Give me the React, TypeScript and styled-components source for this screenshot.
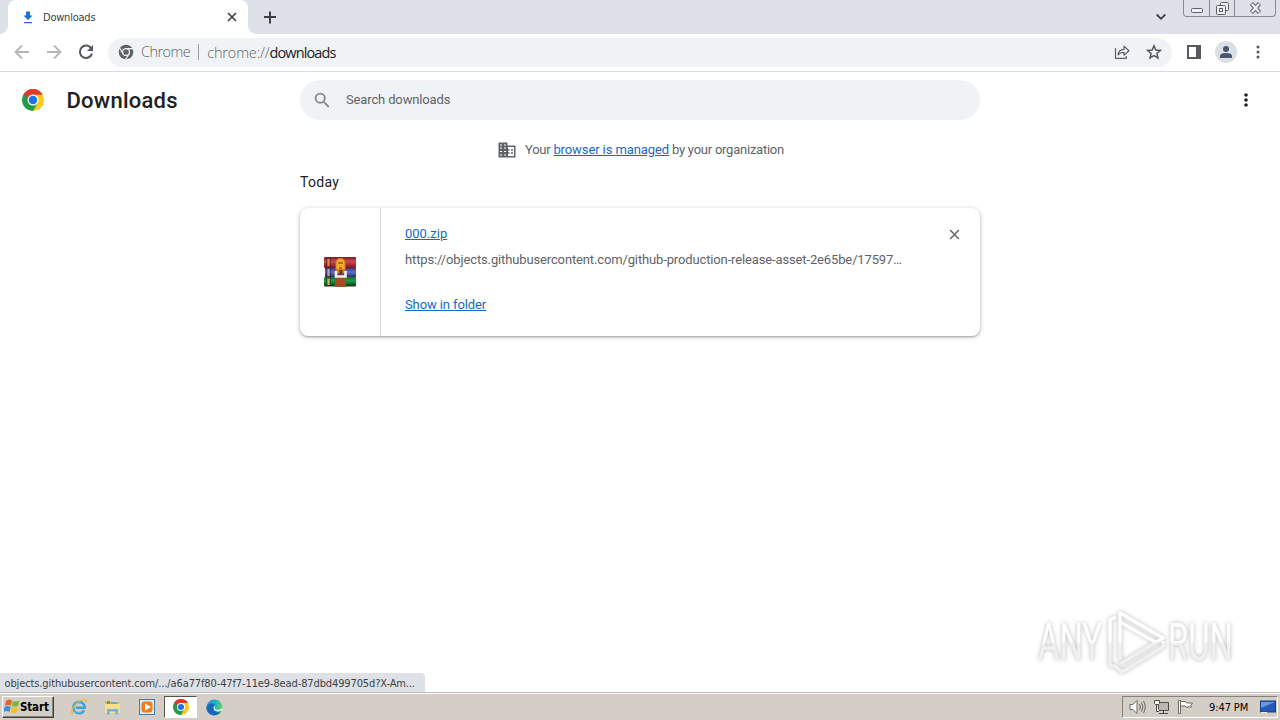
import React from 'react';
import styled, { createGlobalStyle } from 'styled-components';

const GlobalStyle = createGlobalStyle`
  * {
    box-sizing: border-box;
  }
  body {
    margin: 0;
    overflow: hidden;
    background: #fff;
    font-family: Roboto, 'Liberation Sans', sans-serif;
  }
  svg {
    display: block;
    flex: none;
  }
`;

const uiFont = `'DejaVu Sans Condensed', 'DejaVu Sans', sans-serif`;

const Screen = styled.div`
  position: relative;
  width: 1280px;
  height: 720px;
  display: flex;
  flex-direction: column;
  overflow: hidden;
`;

/* ---------- tab strip ---------- */

const TabStrip = styled.div`
  height: 34px;
  flex: none;
  display: flex;
  align-items: flex-start;
  background: #dee1e8;
  padding: 0 4px 0 8px;
`;

const Tab = styled.div`
  position: relative;
  width: 240px;
  height: 34px;
  display: flex;
  align-items: center;
  padding: 0 11px 0 14px;
  background: #fff;
  border-radius: 8px 8px 0 0;

  &::before,
  &::after {
    content: '';
    position: absolute;
    bottom: 0;
    width: 8px;
    height: 8px;
  }
  &::before {
    left: -8px;
    background: radial-gradient(circle at 0 0, transparent 7.5px, #fff 8px);
  }
  &::after {
    right: -8px;
    background: radial-gradient(circle at 100% 0, transparent 7.5px, #fff 8px);
  }
`;

const TabTitle = styled.span`
  flex: 1;
  margin-left: 9px;
  font: 11px ${uiFont};
  letter-spacing: -0.22px;
  color: #3c4043;
`;

const NewTab = styled.div`
  padding: 11px 0 0 16px;
`;

const TabSearch = styled.div`
  margin-left: auto;
  padding: 13px 17px 0 0;
`;

const WindowControls = styled.div`
  display: flex;
  width: 93px;
  height: 17px;
  border: 1px solid #858991;
  border-top: 0;
  border-radius: 0 0 4px 4px;
`;

const WindowButton = styled.div<{ $width: number }>`
  width: ${(props) => props.$width}px;
  display: flex;
  align-items: center;
  justify-content: center;

  & + & {
    border-left: 1px solid #858991;
  }
`;

/* ---------- toolbar ---------- */

const Toolbar = styled.div`
  height: 38px;
  flex: none;
  display: flex;
  align-items: center;
  padding: 0 13px 0 14px;
  border-bottom: 1px solid #dadce0;
  background: #fff;
`;

const NavButtons = styled.div`
  width: 94px;
  display: flex;
  gap: 16px;
  padding-bottom: 1px;
`;

const Omnibox = styled.div`
  width: 1064px;
  height: 29px;
  display: flex;
  align-items: center;
  padding: 0 10px 1px;
  background: #f0f3f5;
  border-radius: 15px;
  font: 300 14.5px 'Open Sans', 'Noto Sans', sans-serif;
  color: #5f6368;
`;

const SiteChip = styled.span`
  margin-left: 7px;
  padding-right: 8px;
  line-height: 16px;
  letter-spacing: -0.55px;
  border-right: 1px solid #9aa0a6;
`;

const Url = styled.span`
  flex: 1;
  margin-left: 8px;
  letter-spacing: -0.15px;

  b {
    font-weight: 400;
    letter-spacing: -0.9px;
    color: #202124;
  }
`;

const OmniActions = styled.div`
  display: flex;
  gap: 16px;
`;

const ToolActions = styled.div`
  display: flex;
  align-items: center;
  margin-left: 14px;
  gap: 13px;
  padding-bottom: 1px;
`;

const Avatar = styled.div`
  width: 22px;
  height: 22px;
  display: flex;
  align-items: center;
  justify-content: center;
  border-radius: 50%;
  background: #dadfe6;
`;

/* ---------- page ---------- */

const Page = styled.div`
  flex: 1;
  background: #fff;
`;

const Header = styled.div`
  height: 56px;
  display: flex;
  align-items: center;
  padding: 0 26px 0 22px;
`;

const Title = styled.h1`
  width: 256px;
  margin: 0;
  padding-left: 22.5px;
  font-size: 22px;
  font-weight: 500;
  letter-spacing: 0.25px;
  color: #202124;
`;

const SearchBox = styled.div`
  width: 680px;
  height: 40px;
  display: flex;
  align-items: center;
  margin-right: auto;
  padding: 0 0 1px 14px;
  gap: 16px;
  border-radius: 20px;
  background: #f0f3f5;
  font-size: 13px;
  letter-spacing: -0.14px;
  color: #5f6368;
`;

const Content = styled.div`
  width: 680px;
  margin: 0 auto;
`;

const Link = styled.span`
  letter-spacing: -0.1px;
  color: #1967c8;
  text-decoration: underline;
`;

const ManagedNote = styled.div`
  height: 44px;
  display: flex;
  align-items: center;
  justify-content: center;
  gap: 9px;
  padding: 0 0 1px 2px;
  font-size: 13px;
  letter-spacing: -0.24px;
  color: #5f6368;
`;

const DateLabel = styled.div`
  height: 36px;
  padding-top: 2px;
  font-size: 14px;
  line-height: 17px;
  letter-spacing: 0.3px;
  color: #202124;
`;

const Card = styled.div`
  height: 128px;
  display: flex;
  border-radius: 8px;
  background: #fff;
  box-shadow: 0 1px 2px rgba(60, 64, 67, 0.4), 0 1px 4px 1px rgba(60, 64, 67, 0.16);
`;

const FileIcon = styled.div`
  width: 81px;
  display: flex;
  align-items: center;
  justify-content: center;
  border-right: 1px solid #d7d9dc;
`;

const Details = styled.div`
  flex: 1;
  padding: 17px 0 0 24px;
  font-size: 13px;
  line-height: 18px;
  color: #5f6368;
`;

const FileName = styled(Link)`
  display: block;
  letter-spacing: 0;
`;

const FileUrl = styled.div`
  margin: 8px 0 27px;
  letter-spacing: -0.135px;
`;

const RemoveButton = styled.div`
  padding: 21px 20px 0 0;
`;

/* ---------- overlays ---------- */

const StatusBubble = styled.div`
  position: absolute;
  left: 0;
  bottom: 28px;
  width: 425px;
  height: 19px;
  padding-left: 4.5px;
  border-radius: 0 4px 0 0;
  background: #dee1e6;
  font: 11px/21px ${uiFont};
  letter-spacing: -0.12px;
  white-space: nowrap;
  color: #3c4043;
`;

const Watermark = styled.svg`
  position: absolute;
  left: 1030px;
  top: 604px;
  filter: drop-shadow(0 0 2px rgba(0, 0, 0, 0.28));
`;

/* ---------- taskbar ---------- */

const Taskbar = styled.div`
  height: 28px;
  flex: none;
  display: flex;
  align-items: center;
  padding: 1px 2px 0 2px;
  border-top: 1px solid #b9b9b5;
  box-shadow: inset 0 1px #fff;
  background: #d5cec6;
`;

const StartButton = styled.div`
  width: 52px;
  height: 22px;
  display: flex;
  align-items: center;
  padding-left: 1px;
  border: 1px solid;
  border-color: #fff #404040 #404040 #fff;
  box-shadow: inset -1px -1px #85817b;
  font: bold 11.5px ${uiFont};
  letter-spacing: -0.15px;
  color: #000;
`;

const QuickLaunch = styled.div`
  display: flex;
  align-items: center;
  margin-left: 8px;
  gap: 1px;
`;

const TaskButton = styled.div<{ $active?: boolean }>`
  width: 33px;
  height: 22px;
  display: flex;
  align-items: center;
  justify-content: center;
  border: 1px solid transparent;
  ${(props) =>
    props.$active &&
    `
    background: #fff;
    border-color: #55524e #fff #fff #55524e;
  `}
`;

const Tray = styled.div`
  width: 156px;
  height: 22px;
  margin-left: auto;
  display: flex;
  align-items: center;
  padding: 0 0 0 6px;
  border: 1px solid;
  border-color: #85817b #fff #fff #85817b;
  font: 11px ${uiFont};
  color: #000;
`;

const TrayIcons = styled.div`
  display: flex;
  gap: 7px;
`;

const Clock = styled.span`
  margin-left: 15px;
  width: 51px;
  letter-spacing: -0.1px;
`;

/* ---------- icons ---------- */

const ChromeLogo = ({ size }: { size: number }) => (
  <svg width={size} height={size} viewBox="0 0 24 24">
    <path d="M12 12V0l10.39 6A12 12 0 0 1 12 24z" fill="#fcc91c" />
    <path d="M1.61 6A12 12 0 0 0 12 24l5.2-9L12 12z" fill="#219a4c" />
    <path d="M1.61 6A12 12 0 0 1 22.39 6H12L6.8 15z" fill="#df3a2c" />
    <path d="M1.61 6 6.8 15l5.2-3z" fill="#219a4c" />
    <path d="M1.61 6A12 12 0 0 1 22.39 6H12a6 6 0 0 0-5.2 3z" fill="#df3a2c" />
    <circle cx="12" cy="12" r="6" fill="#fff" />
    <circle cx="12" cy="12" r="4.6" fill="#1a73e8" />
  </svg>
);

const ChromeMono = () => (
  <svg width="16" height="16" viewBox="0 0 24 24">
    <circle cx="12" cy="12" r="11" fill="#5f6368" />
    <g fill="none" stroke="#f1f3f4" strokeWidth="1.8">
      <circle cx="12" cy="12" r="5.2" />
      <path d="M12 6.8h11M7.5 14.6 2 5.2M16.5 14.6 11 24" />
    </g>
  </svg>
);

const Arrow = ({ flip }: { flip?: boolean }) => (
  <svg width="16" height="16" viewBox="0 0 16 16" fill="none" stroke="#b4b6b9" strokeWidth="1.8">
    <path d={flip ? 'M1 8h13M8 1.5 14.5 8 8 14.5' : 'M15 8H2M8 1.5 1.5 8 8 14.5'} />
  </svg>
);

const Reload = () => (
  <svg width="16" height="16" viewBox="0 0 16 16">
    <path d="M13.3 4.4A6.2 6.2 0 1 0 14 9.6" fill="none" stroke="#55585c" strokeWidth="2" />
    <path d="M15 1v6H9z" fill="#55585c" />
  </svg>
);

const Cross = ({ size, color, width }: { size: number; color: string; width: number }) => (
  <svg width={size} height={size} viewBox="0 0 10 10" stroke={color} strokeWidth={width}>
    <path d="m1 1 8 8M9 1 1 9" />
  </svg>
);

const Dots = ({ color, radius }: { color: string; radius: number }) => (
  <svg width="16" height="16" viewBox="0 0 16 16" fill={color}>
    <circle cx="8" cy="3" r={radius} />
    <circle cx="8" cy="8" r={radius} />
    <circle cx="8" cy="13" r={radius} />
  </svg>
);

const Share = () => (
  <svg width="16" height="16" viewBox="0 0 16 16" fill="none" stroke="#5f6368" strokeWidth="1.2">
    <path d="M1.5 4v10.3h10.8V12" />
    <path d="M4 11c.3-3.7 2.4-5.4 6-5.6V2.2l5 4.6-5 4.4V8.3C7.4 8.3 5.5 9 4 11z" strokeLinejoin="round" />
  </svg>
);

const Star = () => (
  <svg width="16" height="16" viewBox="0 0 16 16" fill="none" stroke="#55585c" strokeWidth="1.5">
    <path d="m8 1.8 1.8 4.2 4.6.4-3.5 3 1.1 4.5L8 11.500l-4 2.400 1.100-4.500-3.500-3 4.600-.4z" />
  </svg>
);

const WinRar = () => (
  <svg width="32" height="32" viewBox="0 0 32 32">
    <defs>
      <linearGradient id="red" x2="0" y2="1">
        <stop stopColor="#7c1722" />
        <stop offset=".4" stopColor="#d04a55" />
        <stop offset="1" stopColor="#7e1320" />
      </linearGradient>
      <linearGradient id="blue" x2="0" y2="1">
        <stop stopColor="#37358a" />
        <stop offset=".45" stopColor="#6270c8" />
        <stop offset="1" stopColor="#2b2a70" />
      </linearGradient>
      <linearGradient id="green" x2="0" y2="1">
        <stop stopColor="#15702f" />
        <stop offset=".4" stopColor="#219847" />
        <stop offset="1" stopColor="#0b3519" />
      </linearGradient>
    </defs>
    <rect y="1" width="32" height="11" rx="1" fill="url(#red)" />
    <rect x="1" y="12" width="31" height="9" fill="url(#blue)" />
    <rect y="21" width="32" height="9.500" rx="1" fill="url(#green)" />
    <path d="M2.500 1v29M6.500 1v29" stroke="#38202b" strokeOpacity=".55" />
    <path d="M4.500 3v7" stroke="#e7872d" strokeWidth="2" />
    <path d="M4.500 13v7" stroke="#b8a6ae" strokeWidth="2" />
    <path d="M4.500 23v6" stroke="#d0c43a" strokeWidth="2" />
    <path d="M11 21h11v10H11z" fill="#a14d24" />
    <path d="M11.500 17V7q.5-5 5-5t5 5v10z" fill="#d67a1c" />
    <path d="M12.500 13V7q.5-4 4-4t4 4v6z" fill="#f2ad2b" />
    <path d="M14 7h5M15 12h3" stroke="#a4521a" strokeWidth="1.500" />
    <path d="M12 15v5.500h9.500V15" fill="none" stroke="#f6f1e9" strokeWidth="2.600" />
    <path d="M16.800 14v5" stroke="#7c3517" strokeWidth="3" />
  </svg>
);

const WindowsFlag = () => (
  <svg width="16" height="16" viewBox="1 1 14.5 14.5">
    <path d="M3 2.5q3-1.8 5.2-.2L7.200 7Q5 5.700 1.800 7z" fill="#e8602c" />
    <path d="M9 2.700q3 1.400 6-.3L13.900 7.200Q11 8.700 8 7.400z" fill="#76b83f" />
    <path d="M1.600 8q3-1.500 5.400 0l-1 4.700q-2.500-1.600-5.500 0z" fill="#3f8fd8" />
    <path d="M7.800 8.400q3 1.300 6-.1l-1.200 4.800q-3 1.500-5.800 0z" fill="#f5bd27" />
  </svg>
);

const Explorer = () => (
  <svg width="18" height="18" viewBox="0 0 18 18" fill="none">
    <path d="M14 12.300A5.700 5.700 0 1 1 14.700 9.700H5.800" stroke="#39a3df" strokeWidth="2.600" />
    <path d="M13 11.500A5 5 0 0 1 4.500 12" stroke="#83d4f4" />
    <path d="M3 16C-1 14.500 5 5 11 2.500c4-1.700 6-.8 5 2" stroke="#e9b93c" strokeWidth="1.300" />
  </svg>
);

const Folder = () => (
  <svg width="17" height="17" viewBox="0 0 17 17">
    <path d="M1 2h5l1 1h8v10H1z" fill="#d9b657" />
    <path d="M3 2h3v3H3z" fill="#56ad55" />
    <path d="M7 3h6v3H7z" fill="#68a9d2" />
    <path d="M1 5h15v9H1z" fill="#f6df8f" />
    <path d="M3 15.500V10h11v5.500h-2.500v-3h-6v3z" fill="#6cb6df" />
  </svg>
);

const MediaPlayer = () => (
  <svg width="16" height="16" viewBox="0 0 16 16">
    <rect x=".5" y=".5" width="15" height="15" fill="#d8e9f5" stroke="#427eaa" />
    <rect x="2.500" y="2.500" width="11" height="11" rx="3" fill="#ef7f16" />
    <path d="M6 4.500 12 8l-6 3.500z" fill="#fff" />
  </svg>
);

const Edge = () => (
  <svg width="17" height="17" viewBox="0 0 17 17">
    <defs>
      <linearGradient id="edge" x2="1" y2=".3">
        <stop stopColor="#168bd4" />
        <stop offset=".6" stopColor="#25b5c2" />
        <stop offset="1" stopColor="#69cf57" />
      </linearGradient>
    </defs>
    <circle cx="8.500" cy="8.500" r="8" fill="url(#edge)" />
    <path d="M.5 8C1.500 4.500 7 3.500 9.500 6 7 6 6.500 8.500 7.500 10.500c1.500 2.600 5 2.500 7.500 1.500-3 5-8 5.200-11 3C1.500 13.200.3 11 .5 8z" fill="#1767bd" />
    <path d="M9.500 6.500c-1.500 1-1 3.200.5 3.900 2 .8 5 .3 6.200-1.300l.6 2.200-1.800.8c-4 1.200-7 .1-7.300-2.500C7.500 8.200 8.200 7 9.500 6.500z" fill="#d9edf2" />
  </svg>
);

const taskItems = [
  { name: 'ie', icon: <Explorer /> },
  { name: 'files', icon: <Folder /> },
  { name: 'media', icon: <MediaPlayer /> },
  { name: 'chrome', icon: <ChromeLogo size={16} />, active: true },
  { name: 'edge', icon: <Edge /> },
];

const App: React.FC = () => {
  return (
    <Screen>
      <GlobalStyle />
      <TabStrip>
        <Tab>
          <svg width="12" height="13" viewBox="0 0 12 13" fill="#1a6fdd">
            <path d="M4 .5h4v4h2.500L6 9 1.500 4.500H4zM2 11h8v1.300H2z" />
          </svg>
          <TabTitle>Downloads</TabTitle>
          <Cross size={10} color="#3c4043" width={1.7} />
        </Tab>
        <NewTab>
          <svg width="13" height="13" viewBox="0 0 13 13" stroke="#3c4043" strokeWidth="2">
            <path d="M6 .5v12M0 6h12" />
          </svg>
        </NewTab>
        <TabSearch>
          <svg width="10" height="8" viewBox="0 0 10 8" fill="none" stroke="#3c4043" strokeWidth="1.8">
            <path d="m.7 1.500 4.300 4.300 4.300-4.300" />
          </svg>
        </TabSearch>
        <WindowControls>
          <WindowButton $width={25}>
            <svg width="12" height="16" viewBox="0 0 12 16">
              <rect x=".5" y="8.500" width="11" height="4" rx="1" fill="#eef0f4" stroke="#5c6068" />
            </svg>
          </WindowButton>
          <WindowButton $width={25}>
            <svg width="13" height="14" viewBox="0 0 13 14" fill="#eef0f4" stroke="#5c6068">
              <rect x="4.500" y="1.500" width="8" height="8" rx="1" />
              <rect x=".5" y="4.500" width="9" height="9" rx="1" />
              <rect x="3.500" y="7.500" width="3" height="3" />
            </svg>
          </WindowButton>
          <WindowButton $width={41}>
            <svg width="13" height="12" viewBox="0 0 13 12">
              <path d="m2.500 1.500 8 9M10.500 1.500l-8 9" stroke="#5c6068" strokeWidth="4.200" />
              <path d="m3 2 7 8M10 2l-7 8" stroke="#eef0f4" strokeWidth="2.400" />
            </svg>
          </WindowButton>
        </WindowControls>
      </TabStrip>

      <Toolbar>
        <NavButtons>
          <Arrow />
          <Arrow flip />
          <Reload />
        </NavButtons>
        <Omnibox>
          <ChromeMono />
          <SiteChip>Chrome</SiteChip>
          <Url>
            chrome://<b>downloads</b>
          </Url>
          <OmniActions>
            <Share />
            <Star />
          </OmniActions>
        </Omnibox>
        <ToolActions>
          <svg width="16" height="14" viewBox="0 0 16 14">
            <path d="M1 0h14v14H1zM3 2v10h7V2z" fill="#5a5a5e" fillRule="evenodd" />
          </svg>
          <Avatar>
            <svg width="14" height="14" viewBox="0 0 14 14" fill="#485470">
              <circle cx="7" cy="4" r="3" />
              <path d="M1 13v-2q0-3 6-3t6 3v2z" />
            </svg>
          </Avatar>
          <Dots color="#55585c" radius={1.5} />
        </ToolActions>
      </Toolbar>

      <Page>
        <Header>
          <ChromeLogo size={22} />
          <Title>Downloads</Title>
          <SearchBox>
            <svg width="16" height="16" viewBox="0 0 16 16" fill="none" stroke="#85898d" strokeWidth="1.900">
              <circle cx="6.200" cy="6.200" r="4.600" />
              <path d="m9.800 9.800 5 5" />
            </svg>
            Search downloads
          </SearchBox>
          <Dots color="#202124" radius={1.8} />
        </Header>
        <Content>
          <ManagedNote>
            <svg width="18" height="16" viewBox="0 0 18 16">
              <path d="M.5.500h9v3h8v12H.5z" fill="#5f6368" />
              <path d="M2 3h2M6 3h2M2 6h2M6 6h2M2 9.500h2M6 9.500h2M2 13h2M6 13h2" stroke="#fff" strokeWidth="1.200" />
              <path d="M10 5h6v9h-6z" fill="#fff" />
              <path d="M9.500 8h2M9.500 11h2M13 8h2M13 11h2" stroke="#5f6368" strokeWidth="1.700" />
            </svg>
            <span>
              Your <Link>browser is managed</Link> by your organization
            </span>
          </ManagedNote>
          <DateLabel>Today</DateLabel>
          <Card>
            <FileIcon>
              <WinRar />
            </FileIcon>
            <Details>
              <FileName>000.zip</FileName>
              <FileUrl>https://objects.githubusercontent.com/github-production-release-asset-2e65be/17597…</FileUrl>
              <Link>Show in folder</Link>
            </Details>
            <RemoveButton>
              <Cross size={11} color="#5f6368" width={1.3} />
            </RemoveButton>
          </Card>
        </Content>
      </Page>

      <Taskbar>
        <StartButton>
          <WindowsFlag />
          Start
        </StartButton>
        <QuickLaunch>
          {taskItems.map((item) => (
            <TaskButton key={item.name} $active={item.active}>
              {item.icon}
            </TaskButton>
          ))}
        </QuickLaunch>
        <Tray>
          <TrayIcons>
            <svg width="17" height="16" viewBox="0 0 17 16" fill="none" stroke="#6b6965">
              <path d="M1 5.500h3l4-4v13l-4-4H1z" fill="#fff" />
              <path d="M10.500 5q2 3 0 6M12.500 3.500q3 4.500 0 9M14.500 2q3.500 6 0 12" />
            </svg>
            <svg width="17" height="16" viewBox="0 0 17 16" fill="#fff" stroke="#4f4d4a">
              <path d="M5.500 3.500h10v8h-10z" fill="#bbb6b0" />
              <path d="M10.500 12v2M6 14.500h9" />
              <path d="M1.500 1.500h5v3l-1 1h-3l-1-1zM3.500 6v6.500H6" />
            </svg>
            <svg width="17" height="16" viewBox="0 0 17 16" fill="#fff" stroke="#6b6965">
              <path d="M1.500 1.500h2v13h-2zM3.500 2.500h5l1 1.500h6l-2 3 1 1H9l-1-1H3.500z" />
            </svg>
          </TrayIcons>
          <Clock>9:47 PM</Clock>
          <svg width="16" height="16" viewBox="0 0 16 16">
            <rect x=".5" y="2" width="15" height="11" fill="#255ab6" stroke="#163c83" />
            <path d="M1 3h14L1 9z" fill="#6598dc" />
            <path d="M1 13.500h6" stroke="#e9eff5" />
          </svg>
        </Tray>
      </Taskbar>

      <StatusBubble>objects.githubusercontent.com/.../a6a77f80-47f7-11e9-8ead-87dbd499705d?X-Am...</StatusBubble>

      <Watermark width="250" height="74" viewBox="0 0 250 74">
        <defs>
          <linearGradient id="mark" gradientUnits="userSpaceOnUse" x1="0" y1="0" x2="0" y2="74">
            <stop offset=".5" stopColor="#fff" />
            <stop offset=".54" stopColor="#f0f0f0" />
          </linearGradient>
        </defs>
        <g fill="url(#mark)" fontFamily="Roboto, sans-serif" fontSize="52" fontWeight="400">
          <text x="8" y="56" textLength="64" lengthAdjust="spacingAndGlyphs">
            ANY
          </text>
          <text x="138" y="56" textLength="65" lengthAdjust="spacingAndGlyphs">
            RUN
          </text>
        </g>
        <g fill="none" stroke="url(#mark)" strokeWidth="3.5" strokeLinejoin="round">
          <path d="M90 56V9l43 25-43 26" />
          <path d="M90 18l35 20" />
          <path d="M86 13l-6 3v46h5M84 61l8 7 41-25v-6" />
        </g>
      </Watermark>
    </Screen>
  );
};

export default App;
